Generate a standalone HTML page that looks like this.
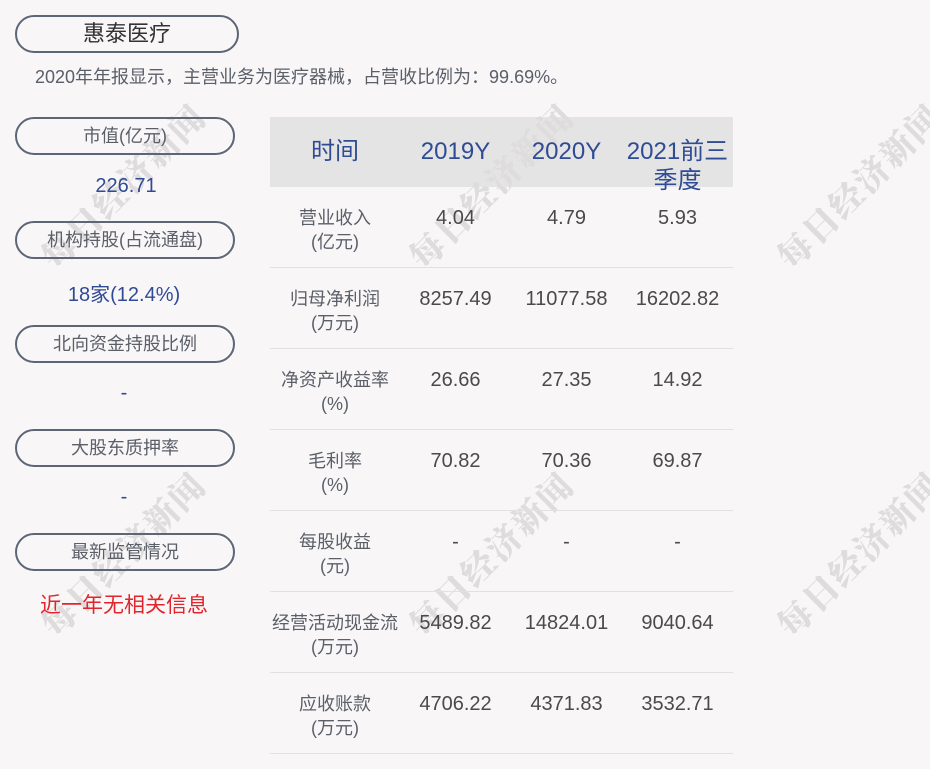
<!DOCTYPE html>
<html><head><meta charset="utf-8"><style>
body{margin:0;width:930px;height:769px;background:#f9f6f7;position:relative;overflow:hidden;font-family:"Liberation Sans","Noto Sans CJK SC",sans-serif}
.a{position:absolute}
.pill{position:absolute;left:16px;width:216px;height:34px;border:2px solid #5d6676;border-radius:19px;text-align:center;line-height:34px;font-size:18px;color:#5a5f68}
.val{position:absolute;left:16px;width:220px;text-align:center;font-size:20px;color:#2f4b94}
.wm{position:absolute;font-family:"Noto Serif CJK SC",serif;font-weight:900;font-size:34px;color:#dedcdd;transform:translate(-50%,-50%) rotate(-45deg);white-space:nowrap;letter-spacing:2px}
.hd{position:absolute;top:117px;left:270px;width:463px;height:70px;background:#e4e4e4}
.c{position:absolute;text-align:center}
.h{color:#2f4b94;font-size:24px;line-height:29px}
.lb{color:#5a5f68;font-size:18px;line-height:24px}
.v{color:#4a4a4a;font-size:20px;line-height:24px}
.ln{position:absolute;left:270px;width:463px;height:1px;background:#e2e0e1}
</style></head><body>
<div class="hd"></div>
<div class="wm" style="left:122px;top:185px">每日经济新闻</div>
<div class="wm" style="left:490px;top:185px">每日经济新闻</div>
<div class="wm" style="left:858px;top:185px">每日经济新闻</div>
<div class="wm" style="left:122px;top:553px">每日经济新闻</div>
<div class="wm" style="left:490px;top:553px">每日经济新闻</div>
<div class="wm" style="left:858px;top:553px">每日经济新闻</div>
<div class="pill" style="top:15px;left:15px;width:220px;height:34px;font-size:22px;color:#333">惠泰医疗</div>
<div class="a" style="left:35px;top:63px;font-size:18px;color:#5a5f68">2020年年报显示<span style="font-family:'Noto Sans CJK SC',sans-serif">，</span>主营业务为医疗器械<span style="font-family:'Noto Sans CJK SC',sans-serif">，</span>占营收比例为<span style="font-family:'Noto Sans CJK SC',sans-serif">：</span>99.69%。</div>
<div class="pill" style="top:117px;left:15px">市值(亿元)</div>
<div class="val" style="top:175px">226.71</div>
<div class="pill" style="top:221px;left:15px">机构持股(占流通盘)</div>
<div class="val" style="top:278px;left:14px">18家(12.4%)</div>
<div class="pill" style="top:325px;left:15px">北向资金持股比例</div>
<div class="val" style="top:382px;left:14px">-</div>
<div class="pill" style="top:429px;left:15px">大股东质押率</div>
<div class="val" style="top:486px;left:14px">-</div>
<div class="pill" style="top:533px;left:15px">最新监管情况</div>
<div class="val" style="top:589px;left:14px;color:#e0262c;font-size:21px">近一年无相关信息</div>
<div class="c h" style="left:270px;width:130px;top:137px">时间</div>
<div class="c h" style="left:400px;width:111px;top:137px">2019Y</div>
<div class="c h" style="left:511px;width:111px;top:137px">2020Y</div>
<div class="c h" style="left:622px;width:111px;top:137px">2021前三<br>季度</div>
<div id="rows"></div>
<script>
var d=[["营业收入","(亿元)","4.04","4.79","5.93"],["归母净利润","(万元)","8257.49","11077.58","16202.82"],["净资产收益率","(%)","26.66","27.35","14.92"],["毛利率","(%)","70.82","70.36","69.87"],["每股收益","(元)","-","-","-"],["经营活动现金流","(万元)","5489.82","14824.01","9040.64"],["应收账款","(万元)","4706.22","4371.83","3532.71"]];
var h="";d.forEach(function(r,i){var t=187+i*81;
h+='<div class="c lb" style="left:266px;width:138px;top:'+(t+19)+'px">'+r[0]+'<br>'+r[1]+'</div>';
[400,511,622].forEach(function(x,j){h+='<div class="c v" style="left:'+x+'px;width:111px;top:'+(t+19)+'px">'+r[2+j]+'</div>'});
h+='<div class="ln" style="top:'+(t+80)+'px"></div>';});
document.getElementById("rows").innerHTML=h;
</script>
</body></html>
